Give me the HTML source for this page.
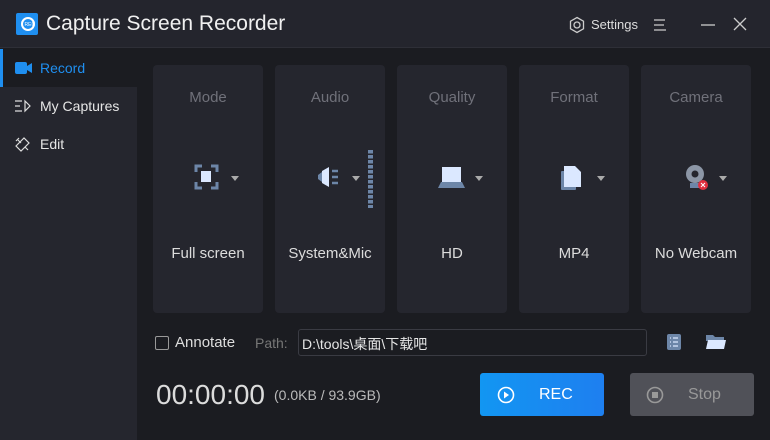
<!DOCTYPE html><html><head><meta charset="utf-8"><style>
*{margin:0;padding:0;box-sizing:border-box}
body{width:770px;height:440px;overflow:hidden;background:#1b1c21;font-family:"Liberation Sans","Noto Sans CJK SC",sans-serif;position:relative;color:#e6e6e6}
.a{position:absolute}
.card{position:absolute;top:65px;width:110px;height:248px;background:#25262e;border-radius:4px;text-align:center}
.card .t{position:absolute;top:24px;width:100%;font-size:15px;color:#70717a}
.card .b{position:absolute;top:180px;width:100%;font-size:15px;color:#dcdcdc}
.card svg{position:absolute;left:0;top:97px}
.tri{fill:#aaa}
</style></head><body>
<div class="a" style="left:0;top:0;width:770px;height:48px;background:#24252d;border-bottom:1px solid #2e2f37"></div>
<div class="a" style="left:16px;top:13px;width:22px;height:22px;background:#1f8ff0;border-radius:2px"></div>
<svg class="a" style="left:16px;top:13px" width="22" height="22"><circle cx="12" cy="11" r="6" fill="none" stroke="#fff" stroke-width="2"/><text x="8.5" y="13" font-size="5" fill="#fff" font-family="Liberation Sans">REC</text></svg>
<div class="a" style="left:46px;top:12px;font-size:21px;color:#f0f0f0">Capture Screen Recorder</div>
<svg class="a" style="left:568px;top:16px" width="18" height="18"><polygon points="9,1.5 15.5,5.2 15.5,12.8 9,16.5 2.5,12.8 2.5,5.2" fill="none" stroke="#ccc" stroke-width="1.3"/><circle cx="9" cy="9" r="3" fill="none" stroke="#ccc" stroke-width="1.3"/></svg>
<div class="a" style="left:591px;top:17px;font-size:13px;color:#ddd">Settings</div>
<svg class="a" style="left:652px;top:17px" width="16" height="16"><path d="M2 3H13M2 8H12M2 13H14" stroke="#ccc" stroke-width="1.3"/></svg>
<svg class="a" style="left:700px;top:17px" width="16" height="16"><path d="M1 8H15" stroke="#ccc" stroke-width="1.3"/></svg>
<svg class="a" style="left:733px;top:17px" width="14" height="14"><path d="M1 1L13 13M13 1L1 13" stroke="#ccc" stroke-width="1.3"/></svg>
<div class="a" style="left:0;top:87px;width:137px;height:353px;background:#25262e"></div>
<div class="a" style="left:0;top:49px;width:3px;height:38px;background:#1f8ff0"></div>
<svg class="a" style="left:15px;top:62px" width="18" height="12"><rect x="0" y="0" width="12" height="12" rx="2" fill="#1f8ff0"/><path d="M12 4L17 1V11L12 8Z" fill="#1f8ff0"/></svg>
<div class="a" style="left:40px;top:60px;font-size:14px;color:#1f8ff0">Record</div>
<svg class="a" style="left:14px;top:99px" width="18" height="14"><path d="M1 2H8M1 7H6M1 12H8M11 2L16 7L11 12Z" stroke="#ddd" stroke-width="1.2" fill="none"/></svg>
<div class="a" style="left:40px;top:98px;font-size:14px;color:#e6e6e6">My Captures</div>
<svg class="a" style="left:14px;top:136px" width="18" height="16"><path d="M2 10L10 2L15 7L7 15ZM4 4L7 7M11 11L14 14M5 2L2 5" stroke="#ddd" stroke-width="1.2" fill="none"/></svg>
<div class="a" style="left:40px;top:136px;font-size:14px;color:#e6e6e6">Edit</div>

<div class="card" style="left:153px"><div class="t">Mode</div>
<svg width="110" height="34"><path d="M43 10V4H49M58 4H64V10M64 20V26H58M49 26H43V20" stroke="#6d86a8" stroke-width="3" fill="none"/><rect x="48" y="9" width="10" height="11" fill="#dbe8ff"/><polygon class="tri" points="78,14 86,14 82,19"/></svg>
<div class="b">Full screen</div></div>
<div class="card" style="left:275px"><div class="t">Audio</div>
<svg width="110" height="34"><path d="M54 5V25L47 21V9Z" fill="#dbe8ff"/><path d="M47 10L43 13V17L47 20Z" fill="#6d86a8"/><path d="M57 9H63M57 15H63M57 21H63" stroke="#6d86a8" stroke-width="2.5"/><polygon class="tri" points="77,14 85,14 81,19"/></svg>
<div class="b">System&amp;Mic</div></div>
<div class="a" style="left:368px;top:150px;width:5px;height:58px;background:repeating-linear-gradient(#6d86a8 0 3.5px,transparent 3.5px 5px)"></div>
<div class="card" style="left:397px"><div class="t">Quality</div>
<svg width="110" height="34"><rect x="45" y="5" width="19" height="15" fill="#dbe8ff"/><path d="M41 26L44 20H65L68 26Z" fill="#6d86a8"/><polygon class="tri" points="78,14 86,14 82,19"/></svg>
<div class="b">HD</div></div>
<div class="card" style="left:519px"><div class="t">Format</div>
<svg width="110" height="34"><rect x="42" y="9" width="15" height="19" rx="1" fill="#6d86a8"/><path d="M45 4H56L62 10V25H45Z" fill="#dbe8ff"/><polygon class="tri" points="78,14 86,14 82,19"/></svg>
<div class="b">MP4</div></div>
<div class="card" style="left:641px"><div class="t">Camera</div>
<svg width="110" height="34"><circle cx="54" cy="12" r="9" fill="#8c96a6"/><circle cx="54" cy="12" r="3.5" fill="#25262e"/><rect x="49" y="21" width="9" height="5" fill="#6d86a8"/><circle cx="62" cy="23" r="5" fill="#e03040"/><path d="M60 21L64 25M64 21L60 25" stroke="#fff" stroke-width="1"/><polygon class="tri" points="78,14 86,14 82,19"/></svg>
<div class="b">No Webcam</div></div>

<div class="a" style="left:155px;top:336px;width:14px;height:14px;border:1px solid #999;border-radius:2px"></div>
<div class="a" style="left:175px;top:334px;font-size:15px;color:#ddd">Annotate</div>
<div class="a" style="left:255px;top:335px;font-size:14px;color:#777">Path:</div>
<div class="a" style="left:298px;top:329px;width:349px;height:27px;border:1px solid #3a3b43;border-radius:3px;background:#1b1c21"></div>
<div class="a" style="left:302px;top:334px;font-size:14px;color:#e6e6e6">D:\tools\桌面\下载吧</div>
<svg class="a" style="left:665px;top:333px" width="18" height="18"><rect x="2" y="1" width="14" height="16" rx="2" fill="#6d86a8"/><path d="M5 5H6M8 5H13M5 9H6M8 9H13M5 13H6M8 13H13" stroke="#dbe8ff" stroke-width="1.2"/></svg>
<svg class="a" style="left:705px;top:333px" width="22" height="18"><path d="M1 2H8L10 4H19V8H1Z" fill="#6d86a8"/><path d="M1 16L3 7H21L19 16Z" fill="#dbe8ff"/></svg>
<div class="a" style="left:156px;top:379px;font-size:28px;color:#dcdcdc">00:00:00</div>
<div class="a" style="left:274px;top:387px;font-size:14px;color:#bbb">(0.0KB / 93.9GB)</div>
<div class="a" style="left:480px;top:373px;width:124px;height:43px;border-radius:3px;background:linear-gradient(90deg,#1296f2,#1e7ff0)"></div>
<svg class="a" style="left:496px;top:385px" width="20" height="20"><circle cx="10" cy="10" r="7.5" fill="none" stroke="#fff" stroke-width="1.6"/><path d="M8 6.5L13 10L8 13.5Z" fill="#fff"/></svg>
<div class="a" style="left:539px;top:386px;font-size:16px;color:#fff">REC</div>
<div class="a" style="left:630px;top:373px;width:124px;height:43px;border-radius:3px;background:#505158"></div>
<svg class="a" style="left:645px;top:385px" width="20" height="20"><circle cx="10" cy="10" r="7.5" fill="none" stroke="#999" stroke-width="1.6"/><rect x="7" y="7" width="6" height="6" fill="#999"/></svg>
<div class="a" style="left:688px;top:386px;font-size:16px;color:#999">Stop</div>
</body></html>
